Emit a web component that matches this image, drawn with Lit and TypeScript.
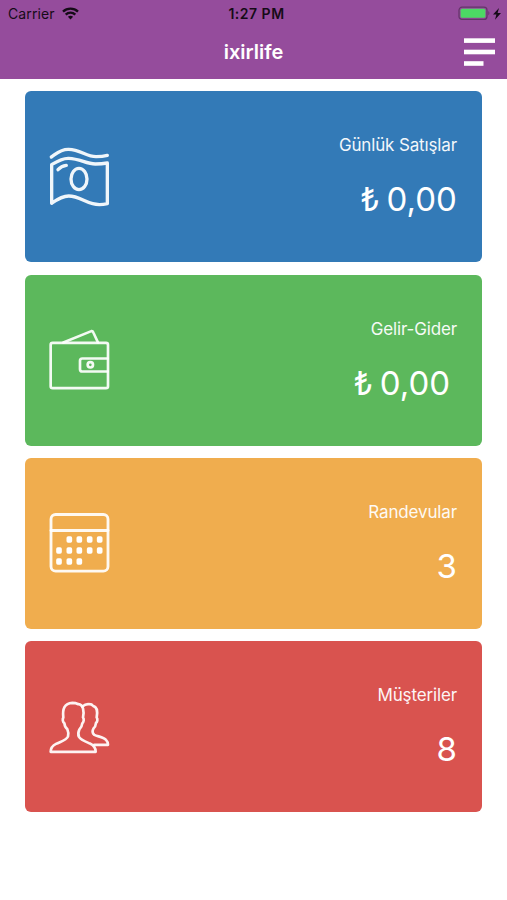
import { LitElement, html, svg, css } from "lit";
import { customElement, property } from "lit/decorators.js";

const money = svg`
  <g stroke-width="10">
    <path d="M34 67C48 58 62 43 86 44C121 45 139 66 168 66C184 66 191 65 202 62" />
    <path d="M35 90C48 82 66 70 86 71C121 72 138 88 166 88C183 88 191 87 202 85V207C188 210 172 211 158 207C132 200 114 184 86 184C65 184 49 196 35 206Z" />
    <ellipse cx="117" cy="133" rx="24" ry="32" />
    <path d="M54 105C60 98 69 93 79 92" />
  </g>`;

const wallet = svg`
  <rect x="32" y="69" width="172" height="136" rx="6" />
  <path d="M70 68L154 34Q158 33 160 38L174 68" />
  <path d="M203 116H127Q120 116 120 123V148Q120 155 127 155H203" />
  <circle cx="151" cy="135" r="8" />`;

const dots: [number, number][] = [
  [88, 111], [118, 111], [149, 111], [179, 111],
  [57, 144], [88, 144], [118, 144], [149, 144], [179, 144],
  [57, 177], [88, 177], [118, 177],
];

const calendar = svg`
  <rect x="33" y="36" width="171" height="170" rx="14" stroke-width="8.5" />
  <path d="M33 84H204" stroke-width="8.5" />
  ${dots.map(([x, y]) => svg`<rect class="dot" x=${x - 8.5} y=${y - 9.5} width="17" height="19" rx="5" />`)}`;

const people = svg`
  <path d="M32 185C32 172 38 166 48 161C65 153 79 150 84 139C86 133 85 124 82 117C76 113 74 107 73 99C68 96 67 87 70 82C67 57 73 39 97 38C106 38 111 40 115 42C130 43 133 63 129 82C133 87 131 96 127 99C126 108 123 114 118 118C114 126 114 134 117 140C122 149 136 154 150 160C161 165 167 172 167 185Z" />
  <path d="M127 49C134 43 142 41 148 42C153 42 157 44 159 47C172 50 173 66 170 82C174 87 172 95 168 98C167 107 165 111 161 114C156 123 157 130 163 134C174 139 191 141 198 149C203 154 204 158 204 164H163" />`;

@customElement("stat-card")
class StatCard extends LitElement {
  @property() label = "";
  @property() value = "";
  @property({ type: Number }) shift = 0;
  @property({ attribute: false }) icon: unknown;

  static styles = css`
    :host {
      display: flex;
      align-items: center;
      justify-content: space-between;
      box-sizing: border-box;
      height: 171px;
      border-radius: 6px;
      padding: 0 25.5px 0 14.5px;
      color: #fff;
    }
    .icon {
      width: 80px;
      height: 80px;
      flex: none;
      fill: none;
      stroke: #fff;
      stroke-opacity: 0.93;
      stroke-width: 8;
      stroke-linecap: round;
      stroke-linejoin: round;
    }
    .dot { fill: #fff; stroke: none; }
    .texts {
      display: flex;
      flex-direction: column;
      align-items: flex-end;
      padding-bottom: 1px;
      white-space: pre;
    }
    .label { font-size: 17px; line-height: 24px; letter-spacing: -0.15px; opacity: 0.94; }
    .value { font-size: 33px; line-height: 40px; margin-top: 22px; word-spacing: -2.5px; }
  `;

  render() {
    return html`
      <svg class="icon" viewBox="0 ${this.shift} 240 240">${this.icon}</svg>
      <div class="texts">
        <div class="label">${this.label}</div>
        <div class="value">${this.value}</div>
      </div>`;
  }
}

@customElement("app-root")
class AppRoot extends LitElement {
  static styles = css`
    :host {
      display: block;
      height: 900px;
      background: #fff;
      font-family: Inter, "Liberation Sans", sans-serif;
    }
    .header { height: 79px; background: #954c9c; }
    .status {
      display: grid;
      grid-template-columns: 1fr auto 1fr;
      align-items: center;
      height: 27px;
      padding: 0 5px 0 8px;
      color: #150b17;
      font-size: 14px;
    }
    .carrier { display: flex; align-items: center; gap: 7px; letter-spacing: 0.1px; }
    .wifi { width: 17px; height: 13px; }
    .time { font-weight: 600; padding-left: 3px; letter-spacing: 0.5px; }
    .battery { width: 44px; height: 16px; justify-self: end; }
    .nav {
      display: grid;
      grid-template-columns: 1fr auto 1fr;
      align-items: center;
      height: 50px;
      padding: 0 12px;
      color: #fff;
    }
    .title { grid-column: 2; font-size: 20px; font-weight: 600; }
    .menu { width: 31px; height: 28px; justify-self: end; fill: #fff; }
    .cards {
      display: flex;
      flex-direction: column;
      gap: 12.3px;
      padding: 12.4px 24.6px 0 25.4px;
    }
    .blue { background: #337ab7; }
    .green { background: #5cb85c; }
    .amber { background: #f0ad4e; }
    .red { background: #d9534f; }
  `;

  render() {
    return html`
      <header class="header">
        <div class="status">
          <div class="carrier">
            <span>Carrier</span>
            <svg class="wifi" viewBox="0 0 17 13" fill="none" stroke="#150b17" stroke-width="2.4">
              <path d="M1 4.6C5.2.6 11.8.6 16 4.6" />
              <path d="M3.7 7.6C6.4 5 10.6 5 13.3 7.6" />
              <path d="M8.5 12.4L5.9 9.8C7.3 8.5 9.7 8.5 11.1 9.8Z" fill="#150b17" stroke="none" />
            </svg>
          </div>
          <div class="time">1:27 PM</div>
          <svg class="battery" viewBox="0 0 44 16">
            <rect x="1" y="1.2" width="28" height="12.2" rx="3" fill="none" stroke="#633568" stroke-width="1.2" />
            <rect x="2.6" y="2.8" width="24.8" height="9" rx="1.5" fill="#4cd964" />
            <path d="M30.4 5.1Q32.4 7.3 30.4 9.5Z" fill="#633568" />
            <path d="M41 2L35 8.6H38.4L37 13.8L43 7H39.6Z" fill="#150b17" />
          </svg>
        </div>
        <div class="nav">
          <div class="title">ixirlife</div>
          <svg class="menu" viewBox="0 0 31 28">
            <rect y="0.3" width="31" height="4.6" />
            <rect y="11.7" width="31" height="4.6" />
            <rect y="23.2" width="19.5" height="4.6" />
          </svg>
        </div>
      </header>
      <main class="cards">
        <stat-card class="blue" label="Günlük Satışlar" value="₺ 0,00" .shift=${7} .icon=${money}></stat-card>
        <stat-card class="green" label="Gelir-Gider" value="₺ 0,00 " .shift=${0.6} .icon=${wallet}></stat-card>
        <stat-card class="amber" label="Randevular" value="3" .shift=${1.5} .icon=${calendar}></stat-card>
        <stat-card class="red" label="Müşteriler" value="8" .shift=${-9.6} .icon=${people}></stat-card>
      </main>`;
  }
}
